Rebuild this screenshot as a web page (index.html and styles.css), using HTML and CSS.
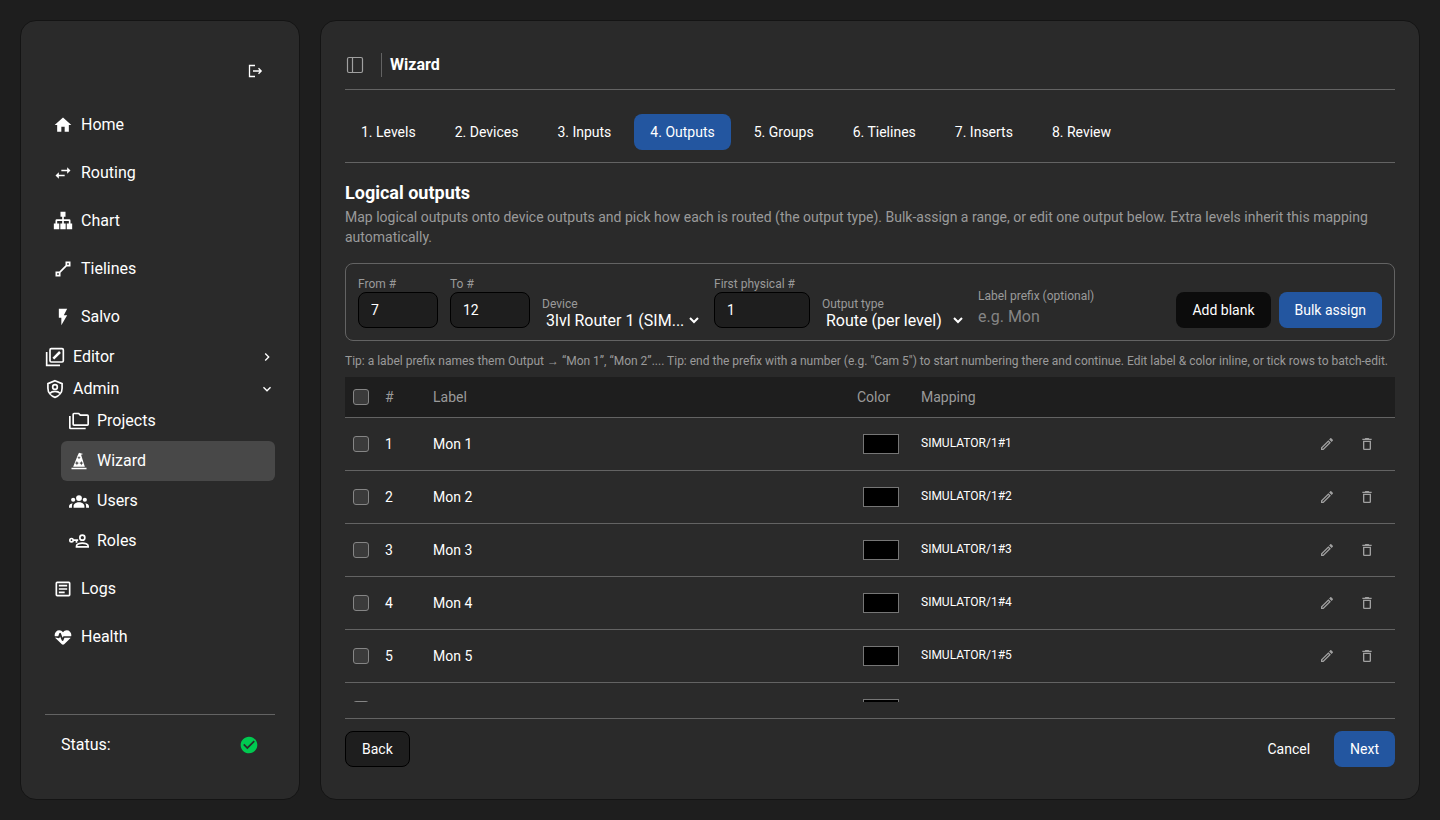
FILE: index.html
```html
<!DOCTYPE html>
<html lang="en">
<head>
    <meta charset="UTF-8">
    <meta name="viewport" content="width=device-width, initial-scale=1.0">
    <title>Wizard</title>
    <link rel="stylesheet" href="styles.css">
</head>
<body>

    <!-- Sidebar -->
    <aside class="sidebar card">
        <div class="sidebar-header">
            <button class="icon-button" aria-label="Log out">
                <svg class="icon-small" viewBox="0 0 16 16" fill="none" stroke="currentColor" stroke-width="1.3"><path d="M8 2.5H2.5v11H8M6 8h7.5M11.5 5.3 14.2 8l-2.7 2.7"/></svg>
            </button>
        </div>

        <nav class="nav">
            <a class="nav-item" href="#"><svg class="icon" viewBox="0 0 24 24"><path d="M10 20v-6h4v6h5v-8h3L12 3 2 12h3v8z"/></svg>Home</a>
            <a class="nav-item" href="#"><svg class="icon" viewBox="0 0 24 24"><path d="M21 9l-4-4v3h-7v2h7v3zM7 11l-4 4 4 4v-3h7v-2H7z"/></svg>Routing</a>
            <a class="nav-item" href="#"><svg class="icon" viewBox="0 0 24 24"><path d="M9 1h6v6h-2v3h6.500a1.500 1.500 0 0 1 1.500 1.500V15h2v7h-6.500v-7H19v-3h-6v3h2.200v7H8.800v-7H11v-3H5v3h2.500v7H1v-7h2v-3.500A1.500 1.500 0 0 1 4.500 10H11V7H9z"/></svg>Chart</a>
            <a class="nav-item" href="#"><svg class="icon" viewBox="0 0 24 24"><path d="M15 3v4.590L7.590 15H3v6h6v-4.580L16.420 9H21V3M17 5h2v2h-2M5 17h2v2H5" fill-rule="evenodd"/></svg>Tielines</a>
            <a class="nav-item" href="#"><svg class="icon" viewBox="0 0 24 24"><path d="M7 2v11h3v9l7-12h-4l4-8z"/></svg>Salvo</a>

            <button class="nav-group">
                <svg class="icon" viewBox="0 0 24 24" fill="none" stroke="currentColor" stroke-width="2"><rect x="6" y="2" width="16" height="16" rx="1.500"/><path d="M2 6v16h16"/><path d="M10 14l8-8" stroke-width="3"/></svg>
                Editor
                <svg class="chevron" viewBox="0 0 24 24"><path d="M8.590 16.580L13.170 12 8.590 7.410 10 6l6 6-6 6z"/></svg>
            </button>

            <div>
                <button class="nav-group">
                    <svg class="icon" viewBox="0 0 24 24" fill="none" stroke="currentColor" stroke-width="2"><path d="M12 2l8.500 3.600V11c0 5-3.500 9.500-8.500 11-5-1.500-8.500-6-8.500-11V5.600z"/><circle cx="12" cy="9.500" r="2.800"/><path d="M5.800 17.200c1.700-1.800 4-2.400 6.200-2.400s4.500.6 6.200 2.400"/></svg>
                    Admin
                    <svg class="chevron" viewBox="0 0 24 24"><path d="M7.410 8.580L12 13.170l4.590-4.590L18 10l-6 6-6-6z"/></svg>
                </button>
                <div class="submenu">
                    <a class="nav-item" href="#"><svg class="icon" viewBox="0 0 24 24"><path d="M22 4h-8l-2-2H6a2 2 0 0 0-2 2v12a2 2 0 0 0 2 2h16a2 2 0 0 0 2-2V6a2 2 0 0 0-2-2m0 12H6V4h5.170l2 2H22v10M2 6H0v14a2 2 0 0 0 2 2h18v-2H2V6z"/></svg>Projects</a>
                    <a class="nav-item active" href="#"><svg class="icon" viewBox="0 0 24 24"><path d="M5 19l5.500-14L12 2l5 1.500-2.500 1L19 19zM3 20h18v2H3zM12 6l-.6 1.400-1.400.6 1.400.6.6 1.400.6-1.400 1.400-.6-1.400-.6zM9.500 12l-.8 1.700-1.700.8 1.700.8.8 1.700.8-1.700 1.700-.8-1.700-.8zM14.800 12l-.8 1.700-1.700.8 1.700.8.8 1.700.8-1.700 1.700-.8-1.700-.8z" fill-rule="evenodd"/></svg>Wizard</a>
                    <a class="nav-item" href="#"><svg class="icon" viewBox="0 0 24 24"><circle cx="12" cy="8.500" r="3.500"/><circle cx="5" cy="10.500" r="2.500"/><circle cx="19" cy="10.500" r="2.500"/><path d="M5.500 20v-2c0-2.500 3-4.500 6.500-4.500s6.500 2 6.500 4.500v2zM0 20v-1.500c0-1.900 1.900-3.300 4.400-3.700C3.800 15.800 3.500 17 3.500 18v2zM24 20v-1.500c0-1.900-1.900-3.300-4.400-3.700.6 1 .9 2.200.9 3.200v2z"/></svg>Users</a>
                    <a class="nav-item" href="#"><svg class="icon" viewBox="0 0 24 24" fill="none" stroke="currentColor" stroke-width="2"><circle cx="16" cy="8" r="3"/><path d="M9 19v-1c0-2.200 4-3.500 7-3.500s7 1.300 7 3.500v1z"/><circle cx="3" cy="11" r="2"/><path d="M5 11h6M9 11v3"/></svg>Roles</a>
                </div>
            </div>

            <a class="nav-item" href="#"><svg class="icon" viewBox="0 0 24 24" fill="none" stroke="currentColor" stroke-width="2"><rect x="4" y="4" width="16" height="16" rx="1"/><path d="M7 8h10M7 12h10M7 16h7"/></svg>Logs</a>
            <a class="nav-item" href="#"><svg class="icon" viewBox="0 0 24 24"><path d="M7.500 4A5.500 5.500 0 0 0 2 9.500c0 .5.090 1 .220 1.500H6.300l1.270-3.370c.3-.8 1.480-.880 1.860 0L11.500 13l.590-1.420c.130-.330.480-.580.910-.580h8.780c.130-.5.220-1 .220-1.500A5.500 5.500 0 0 0 16.500 4c-1.860 0-3.500.930-4.500 2.340C11 4.930 9.360 4 7.500 4M3 12.500a1 1 0 0 0 0 1h.2l7.400 7.200c.8.800 2 .8 2.800 0l7.400-7.200.2-.5h-7.300l-1.270 3.300c-.33.810-1.510.770-1.860 0L8.500 11.500l-.590 1.420c-.13.330-.48.580-.91.580z"/></svg>Health</a>
        </nav>

        <div class="status">
            <span>Status:</span>
            <svg class="icon status-ok" viewBox="0 0 24 24"><path d="M12 2C6.500 2 2 6.500 2 12s4.500 10 10 10 10-4.500 10-10S17.500 2 12 2m-2 15l-5-5 1.410-1.410L10 14.170l7.590-7.590L19 8z"/></svg>
        </div>
    </aside>

    <!-- Main Content -->
    <main class="main card">
        <header class="page-header">
            <button class="icon-button muted" aria-label="Toggle sidebar">
                <svg class="icon" viewBox="0 0 20 20" fill="none" stroke="currentColor" stroke-width="1.200"><rect x="2.500" y="2.500" width="15" height="15" rx="1.500"/><path d="M7.500 2.500v15"/></svg>
            </button>
            <h1>Wizard</h1>
        </header>

        <div class="tabs">
            <button class="button">1. Levels</button>
            <button class="button">2. Devices</button>
            <button class="button">3. Inputs</button>
            <button class="button primary">4. Outputs</button>
            <button class="button">5. Groups</button>
            <button class="button">6. Tielines</button>
            <button class="button">7. Inserts</button>
            <button class="button">8. Review</button>
        </div>

        <h2>Logical outputs</h2>
        <p class="description">Map logical outputs onto device outputs and pick how each is routed (the output type). Bulk-assign a range, or edit one output below. Extra levels inherit this mapping automatically.</p>

        <!-- Bulk Assign Form -->
        <form class="bulk-form">
            <div class="field field-number">
                <label for="from">From #</label>
                <input class="box-input" type="text" id="from" value="7">
            </div>
            <div class="field field-number">
                <label for="to">To #</label>
                <input class="box-input" type="text" id="to" value="12">
            </div>
            <div class="field field-device">
                <label for="device">Device</label>
                <select id="device"><option>3lvl Router 1 (SIM...</option></select>
            </div>
            <div class="field field-physical">
                <label for="physical">First physical #</label>
                <input class="box-input" type="text" id="physical" value="1">
            </div>
            <div class="field field-type">
                <label for="type">Output type</label>
                <select id="type"><option>Route (per level)</option></select>
            </div>
            <div class="field field-prefix">
                <label for="prefix">Label prefix (optional)</label>
                <input class="plain-input" type="text" id="prefix" placeholder="e.g. Mon">
            </div>
            <div class="form-actions">
                <button class="button dark" type="button">Add blank</button>
                <button class="button primary" type="button">Bulk assign</button>
            </div>
        </form>

        <p class="tip">Tip: a label prefix names them Output → “Mon 1”, “Mon 2”.... Tip: end the prefix with a number (e.g. "Cam 5") to start numbering there and continue. Edit label &amp; color inline, or tick rows to batch-edit.</p>

        <!-- Outputs Table -->
        <div class="table-wrap">
            <table>
                <colgroup>
                    <col class="col-check">
                    <col class="col-number">
                    <col>
                    <col class="col-color">
                    <col class="col-mapping">
                    <col class="col-actions">
                </colgroup>
                <thead>
                    <tr>
                        <th><input type="checkbox" aria-label="Select all"></th>
                        <th>#</th>
                        <th>Label</th>
                        <th>Color</th>
                        <th>Mapping</th>
                        <th></th>
                    </tr>
                </thead>
                <tbody id="rows"></tbody>
            </table>
        </div>

        <footer class="page-footer">
            <button class="button outlined">Back</button>
            <div class="footer-actions">
                <button class="button">Cancel</button>
                <button class="button primary">Next</button>
            </div>
        </footer>
    </main>

    <script src="script.js"></script>
</body>
</html>
```

FILE: styles.css
```css
* {
    box-sizing: border-box;
}

body {
    display: grid;
    grid-template-columns: 280px 1fr;
    gap: 20px;
    height: 100vh;
    margin: 0;
    padding: 20px;
    background-color: #1e1e1e;
    color: #fff;
    font-family: Roboto, sans-serif;
    font-size: 16px;
    line-height: 24px;
}

h1, h2, p {
    margin: 0;
}

button, input, select {
    font-family: inherit;
    color: inherit;
}

button {
    border: none;
    background: none;
    cursor: pointer;
}

svg {
    display: block;
    fill: currentColor;
}

svg[fill="none"] {
    fill: none;
}

.card {
    display: flex;
    flex-direction: column;
    min-width: 0;
    min-height: 0;
    padding: 24px;
    background-color: #2a2a2a;
    border: 1px solid #141414;
    border-radius: 16px;
}

.icon {
    flex: none;
    width: 20px;
    height: 20px;
}

.icon-small, .chevron {
    flex: none;
    width: 16px;
    height: 16px;
}

.icon-button {
    display: flex;
    padding: 0;
}

.muted {
    color: #a0a0a0;
}

/* Sidebar */
.sidebar-header {
    display: flex;
    justify-content: flex-end;
    align-items: center;
    height: 52px;
    padding-right: 12px;
}

.nav {
    display: flex;
    flex-direction: column;
    flex: 1;
    gap: 8px;
    padding-top: 8px;
}

.nav-item {
    display: flex;
    align-items: center;
    gap: 8px;
    height: 40px;
    padding: 0 8px;
    border-radius: 6px;
    color: #fff;
    text-decoration: none;
}

.nav-item.active {
    background-color: #484848;
}

.nav-group {
    display: flex;
    align-items: center;
    gap: 8px;
    width: 100%;
    height: 24px;
    padding: 0;
    font-size: 16px;
    line-height: 24px;
}

.nav-group .chevron {
    margin-left: auto;
}

.submenu {
    margin-left: 16px;
}

.status {
    display: flex;
    justify-content: space-between;
    align-items: center;
    height: 61px;
    padding: 0 16px;
    border-top: 1px solid #636363;
}

.status-ok {
    color: #00c950;
}

/* Page Header */
.page-header {
    display: flex;
    align-items: center;
    gap: 16px;
    padding: 8px 0 12px;
    border-bottom: 1px solid #636363;
}

h1 {
    padding-left: 8px;
    border-left: 1px solid #636363;
    font-size: 16px;
    line-height: 24px;
}

/* Buttons */
.button {
    height: 36px;
    padding: 0 16px;
    border-radius: 8px;
    font-size: 14px;
    white-space: nowrap;
}

.button.primary {
    background-color: #2356a0;
}

.button.dark {
    background-color: #0c0c0c;
}

.button.outlined {
    border: 1px solid #000;
    background-color: #1e1e1e;
}

.tabs {
    display: flex;
    gap: 7px;
    padding: 24px 0 12px;
    border-bottom: 1px solid #636363;
}

h2 {
    margin-top: 16px;
    font-size: 18px;
    line-height: 28px;
}

.description {
    color: #9a9a9a;
    font-size: 14px;
    line-height: 20px;
}

/* Bulk Assign Form */
.bulk-form {
    display: flex;
    align-items: flex-end;
    gap: 12px;
    margin-top: 16px;
    padding: 12px;
    border: 1px solid #636363;
    border-radius: 8px;
}

.field {
    display: flex;
    flex-direction: column;
}

.field label {
    color: #9a9a9a;
    font-size: 12px;
    line-height: 16px;
    white-space: nowrap;
}

.field-number {
    width: 80px;
}

.field-device {
    width: 160px;
}

.field-physical {
    width: 96px;
}

.field-type {
    width: 144px;
}

.field-prefix {
    flex: 1;
}

.box-input {
    width: 100%;
    height: 36px;
    padding: 0 12px;
    border: 1px solid #000;
    border-radius: 8px;
    background-color: #1e1e1e;
    font-size: 14px;
}

.plain-input {
    width: 100%;
    height: 24px;
    padding: 0;
    border: none;
    background: none;
    font-size: 16px;
}

.plain-input::placeholder {
    color: #858585;
}

/* Taller than its line so descenders are not clipped */
select {
    width: 100%;
    height: 24px;
    margin: -4px 0;
    padding: 0;
    border: none;
    background-color: transparent;
    font-size: 16px;
}

.form-actions {
    display: flex;
    gap: 8px;
}

.tip {
    margin: 12px 0 8px;
    color: #9a9a9a;
    font-size: 12px;
    line-height: 16px;
    white-space: nowrap;
}

/* Outputs Table */
.table-wrap {
    flex: 1;
    min-height: 0;
    overflow: auto;
    scrollbar-width: none;
}

table {
    width: 100%;
    table-layout: fixed;
    border-spacing: 0;
    font-size: 14px;
    line-height: 20px;
}

th, td {
    padding: 0 8px;
    border-bottom: 1px solid #636363;
    text-align: left;
}

th {
    height: 41px;
    background-color: #1e1e1e;
    color: #9a9a9a;
    font-weight: 400;
}

td {
    height: 53px;
}

.col-check {
    width: 32px;
}

.col-number {
    width: 48px;
}

.col-color {
    width: 64px;
}

.col-mapping {
    width: 320px;
}

.col-actions {
    width: 162px;
}

td.mapping {
    padding-bottom: 2px;
    font-size: 12px;
}

input[type="checkbox"] {
    display: block;
    appearance: none;
    width: 16px;
    height: 16px;
    margin: 0;
    border: 1px solid #858585;
    border-radius: 3px;
    background-color: #3b3b3b;
}

input[type="color"] {
    display: block;
    appearance: none;
    width: 36px;
    height: 20px;
    margin: 0 auto;
    padding: 0;
    border: 1px solid #767676;
    background-color: #000;
}

input[type="color"]::-webkit-color-swatch-wrapper {
    padding: 0;
}

input[type="color"]::-webkit-color-swatch {
    border: none;
}

.row-actions {
    display: flex;
    justify-content: flex-end;
}

.row-actions button {
    display: flex;
    justify-content: center;
    width: 40px;
    padding: 0;
    color: #a0a0a0;
}

/* Footer */
.page-footer {
    display: flex;
    justify-content: space-between;
    margin-top: 16px;
    padding: 12px 0 8px;
    border-top: 1px solid #636363;
}

.footer-actions {
    display: flex;
    gap: 8px;
}
```

FILE: script.js
```js
const rows = document.getElementById('rows');

for (let i = 1; i <= 6; i++) {
    const row = document.createElement('tr');
    row.innerHTML = `
        <td><input type="checkbox" aria-label="Select output ${i}"></td>
        <td>${i}</td>
        <td>Mon ${i}</td>
        <td><input type="color" value="#000000" aria-label="Color of output ${i}"></td>
        <td class="mapping">SIMULATOR/1#${i}</td>
        <td>
            <div class="row-actions">
                <button aria-label="Edit"><svg class="icon-small" viewBox="0 0 24 24"><path d="M14.060 9l.940.940L5.920 19H5v-.920L14.060 9m3.600-6c-.250 0-.510.100-.700.290l-1.830 1.830 3.750 3.750 1.830-1.830c.390-.390.390-1.040 0-1.410l-2.340-2.340c-.200-.200-.450-.290-.710-.290m-3.600 3.190L3 17.250V21h3.750L17.810 9.940l-3.750-3.750z"/></svg></button>
                <button aria-label="Delete"><svg class="icon-small" viewBox="0 0 24 24"><path d="M6 19a2 2 0 0 0 2 2h8a2 2 0 0 0 2-2V7H6v12M8 9h8v10H8V9m7.500-5l-1-1h-5l-1 1H5v2h14V4z"/></svg></button>
            </div>
        </td>
    `;
    rows.appendChild(row);
}
```
